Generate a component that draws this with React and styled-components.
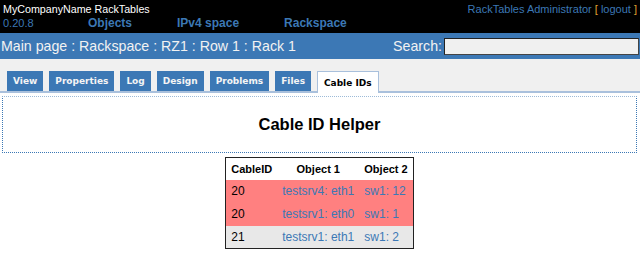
import React from "react";
import styled, { createGlobalStyle } from "styled-components";

const Global = createGlobalStyle`
  html, body { margin: 0; padding: 0; background: #ffffff; }
  body { font-family: "Liberation Sans", Arial, sans-serif; }
  * { box-sizing: border-box; }
`;

const Page = styled.div`
  width: 640px;
  height: 253px;
  overflow: hidden;
  background: #ffffff;
`;

const TopBar = styled.header`
  background: #000;
  height: 33px;
  display: flex;
  flex-direction: column;
  padding: 3px 3px 0 3px;
`;

const TopRow = styled.div`
  display: flex;
  justify-content: space-between;
  align-items: baseline;
  font-size: 11px;
  line-height: 13px;
`;

const Brand = styled.span`
  color: #ffffff;
  font-size: 10.7px;
`;

const UserBox = styled.span`
  color: #3c78b5;
`;

const Bracket = styled.span`
  color: #e0a030;
`;

const NavRow = styled.div`
  display: flex;
  align-items: baseline;
  line-height: 14px;
`;

const Version = styled.span`
  color: #3c78b5;
  font-size: 11px;
  width: 85px;
`;

const Nav = styled.nav`
  display: flex;
  gap: 45px;
`;

const NavLink = styled.a`
  color: #3c78b5;
  font-weight: bold;
  font-size: 12px;
  text-decoration: none;
`;

const PathBar = styled.div`
  background: #3c78b5;
  height: 26px;
  display: flex;
  align-items: center;
  justify-content: space-between;
  padding: 0 1px 0 1px;
  color: #f2f2f2;
  font-size: 14.2px;
`;

const SearchForm = styled.form`
  display: flex;
  align-items: center;
  gap: 2px;
`;

const SearchInput = styled.input`
  width: 195px;
  height: 17px;
  border: 1px solid #444;
  border-top-color: #222;
  border-left-color: #222;
  background: #f0f0f0;
  padding: 0;
  margin: 0;
`;

const TabStrip = styled.div`
  background: #f0f0f0;
  padding: 12px 0 0 7px;
  display: flex;
  gap: 6px;
  border-bottom: 2px solid #a9c0dc;
  height: 34px;
`;

const Tab = styled.a`
  display: flex;
  align-items: center;
  height: ${(p) => (p.$active ? "22px" : "20px")};
  padding: 0 6px;
  font-family: "DejaVu Sans", Verdana, sans-serif;
  font-weight: bold;
  font-size: 9px;
  text-decoration: none;
  color: ${(p) => (p.$active ? "#000" : "#f4f4f4")};
  background: ${(p) => (p.$active ? "#ffffff" : "#3c78b5")};
  border: ${(p) => (p.$active ? "1px solid #a9c0dc" : "none")};
  border-bottom: none;
  margin-bottom: ${(p) => (p.$active ? "-2px" : "0")};
  position: relative;
`;

const Content = styled.main`
  padding: 3px 3px 0 2px;
  display: flex;
  flex-direction: column;
  align-items: center;
`;

const Portlet = styled.section`
  align-self: stretch;
  height: 57px;
  border: 1px dotted #3c78b5;
  border-top-color: #9dbbd8;
  display: flex;
  align-items: center;
  justify-content: center;
`;

const Title = styled.h2`
  margin: 0;
  font-size: 16.5px;
  font-weight: bold;
  color: #000;
`;

const Table = styled.table`
  margin-top: 4px;
  border-collapse: collapse;
  border: 1px solid #222;
  font-size: 12px;
`;

const Th = styled.th`
  font-size: 11px;
  font-weight: bold;
  height: 22px;
  padding: 0 5px;
  background: #fff;
  text-align: center;
`;

const Row = styled.tr`
  background: ${(p) => (p.$state === "error" ? "#ff8080" : "#e8e8e8")};
`;

const Td = styled.td`
  height: 23px;
  padding: 0 5px 0 5px;
  color: #000;
`;

const CellLink = styled.a`
  color: #3c78b5;
  text-decoration: none;
`;

const tabs = ["View", "Properties", "Log", "Design", "Problems", "Files", "Cable IDs"];

const rows = [
  { id: "20", o1: "testsrv4: eth1", o2: "sw1: 12", state: "error" },
  { id: "20", o1: "testsrv1: eth0", o2: "sw1: 1", state: "error" },
  { id: "21", o1: "testsrv1: eth1", o2: "sw1: 2", state: "ok" },
];

export default function App() {
  return (
    <Page>
      <Global />
      <TopBar>
        <TopRow>
          <Brand>MyCompanyName RackTables</Brand>
          <UserBox>
            RackTables Administrator <Bracket>[</Bracket> logout <Bracket>]</Bracket>
          </UserBox>
        </TopRow>
        <NavRow>
          <Version>0.20.8</Version>
          <Nav>
            <NavLink href="#">Objects</NavLink>
            <NavLink href="#">IPv4 space</NavLink>
            <NavLink href="#">Rackspace</NavLink>
          </Nav>
        </NavRow>
      </TopBar>
      <PathBar>
        <span>Main page : Rackspace : RZ1 : Row 1 : Rack 1</span>
        <SearchForm onSubmit={(e) => e.preventDefault()}>
          <span>Search:</span>
          <SearchInput type="text" />
        </SearchForm>
      </PathBar>
      <TabStrip>
        {tabs.map((t) => (
          <Tab key={t} href="#" $active={t === "Cable IDs"}>
            {t}
          </Tab>
        ))}
      </TabStrip>
      <Content>
        <Portlet>
          <Title>Cable ID Helper</Title>
        </Portlet>
        <Table>
          <thead>
            <tr>
              <Th>CableID</Th>
              <Th>Object 1</Th>
              <Th>Object 2</Th>
            </tr>
          </thead>
          <tbody>
            {rows.map((r, i) => (
              <Row key={i} $state={r.state}>
                <Td>{r.id}</Td>
                <Td>
                  <CellLink href="#">{r.o1}</CellLink>
                </Td>
                <Td>
                  <CellLink href="#">{r.o2}</CellLink>
                </Td>
              </Row>
            ))}
          </tbody>
        </Table>
      </Content>
    </Page>
  );
}
